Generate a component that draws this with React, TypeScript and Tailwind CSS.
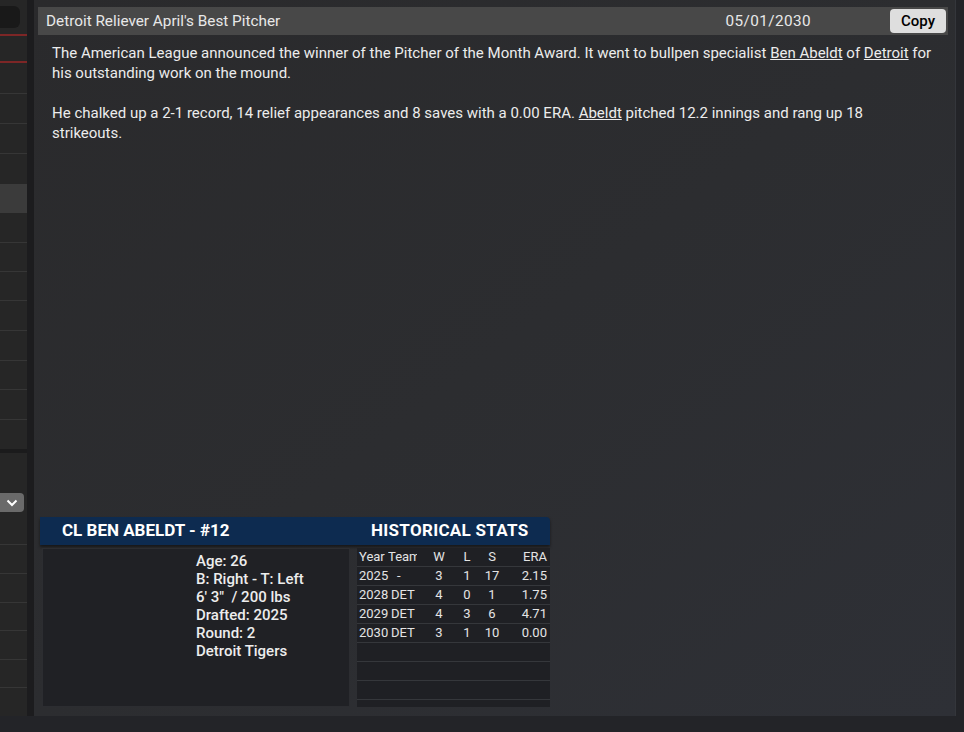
import React from "react";

const font = { fontFamily: "Roboto, 'Noto Sans', sans-serif" };

function Sidebar() {
  return (
    <div className="w-[27px] shrink-0 bg-[#262626] h-[716px] overflow-hidden">
      <div className="h-[6px]" />
      <div className="h-[22px] w-[20px] rounded-r-md bg-[#191919]" />
      <div className="h-[6px]" />
      <div className="h-[2px] bg-[#7d2626]" />
      <div className="h-[25px]" />
      <div className="h-[2px] bg-[#7d2626]" />
      <div className="h-[31px] border-b border-[#363636]" />
      <div className="h-[30px] border-b border-[#363636]" />
      <div className="h-[30px] border-b border-[#363636]" />
      <div className="h-[30px]" />
      <div className="h-[29px] bg-[#3b3b3b]" />
      <div className="h-[30px] border-b border-[#363636]" />
      <div className="h-[29px] border-b border-[#363636]" />
      <div className="h-[29px] border-b border-[#363636]" />
      <div className="h-[30px] border-b border-[#363636]" />
      <div className="h-[30px] border-b border-[#363636]" />
      <div className="h-[29px] border-b border-[#363636]" />
      <div className="h-[30px] border-b border-[#363636]" />
      <div className="h-[29px]" />
      <div className="h-[4px] bg-[#1b1b1c]" />
      <div className="h-[40px]" />
      <div className="h-[19px] w-[24px] rounded-r bg-[#6a6a6a] flex items-center justify-center">
        <svg width="12" height="8" viewBox="0 0 12 8">
          <path d="M1.5 1.5 L6 6 L10.5 1.5" stroke="#fff" strokeWidth="2" fill="none" />
        </svg>
      </div>
      <div className="h-[33px] border-b border-[#363636]" />
      <div className="h-[29px] border-b border-[#363636]" />
      <div className="h-[29px] border-b border-[#363636]" />
      <div className="h-[28px] border-b border-[#363636]" />
      <div className="h-[29px] border-b border-[#363636]" />
      <div className="h-[28px] border-b border-[#363636]" />
    </div>
  );
}

const stats = [
  ["2025", "-", "3", "1", "17", "2.15"],
  ["2028", "DET", "4", "0", "1", "1.75"],
  ["2029", "DET", "4", "3", "6", "4.71"],
  ["2030", "DET", "3", "1", "10", "0.00"],
];

function StatRow({ r, head }: { r: string[]; head?: boolean }) {
  return (
    <div className="flex items-center h-[19px] border-b border-[#35373b] text-[13px] text-[#e4e4e4] pl-[2px]">
      <span className={`${head ? "w-[29px]" : "w-[32px]"} shrink-0`}>{r[0]}</span>
      <span
        className={`${head ? "w-[29px]" : "w-[26px]"} shrink-0 overflow-hidden whitespace-nowrap ${r[1] === "-" ? "pl-[6px]" : ""}`}
      >
        {r[1]}
      </span>
      <span className="w-[44px] shrink-0 text-center">{r[2]}</span>
      <span className="w-[12px] shrink-0 text-center">{r[3]}</span>
      <span className="w-[38px] shrink-0 text-center">{r[4]}</span>
      <span className="w-[36px] shrink-0 text-right">{r[5]}</span>
    </div>
  );
}

function PlayerCard() {
  return (
    <div className="mt-auto ml-[6px] mb-[9px] w-[510px]">
      <div className="h-[28px] flex items-center bg-[#0d2b50] rounded-tr text-white font-bold text-[17px] shadow-[0_2px_3px_rgba(0,0,0,0.5)]">
        <span className="pl-[22px] w-[331px]">CL BEN ABELDT - #12</span>
        <span className="tracking-[0.3px]">HISTORICAL STATS</span>
      </div>
      <div className="flex gap-[7px] mt-[3px]">
        <div className="w-[308px] ml-[2px] h-[159px] bg-[#202125] border border-[#2c2d31] pl-[153px] pt-[3px] text-[15px] leading-[18px] text-[#ededed] font-medium">
          <div>Age: 26</div>
          <div>B: Right - T: Left</div>
          <div>6' 3"&nbsp; / 200 lbs</div>
          <div>Drafted: 2025</div>
          <div>Round: 2</div>
          <div>Detroit Tigers</div>
        </div>
        <div className="w-[193px] h-[159px] bg-[#1f2024]">
          <StatRow head r={["Year", "Team", "W", "L", "S", "ERA"]} />
          {stats.map((r) => (
            <StatRow key={r[0]} r={r} />
          ))}
          <div className="h-[19px] border-b border-[#35373b]" />
          <div className="h-[19px] border-b border-[#35373b]" />
          <div className="h-[19px] border-b border-[#35373b]" />
        </div>
      </div>
    </div>
  );
}

export default function App() {
  return (
    <div className="w-[964px] h-[732px] bg-[#232428] flex items-start overflow-hidden" style={font}>
      <Sidebar />
      <div className="w-[7px] h-[716px] shrink-0 bg-[#1c1c1e]" />
      <div className="w-[922px] h-[716px] shrink-0 flex flex-col bg-gradient-to-br from-[#2a2a2c] via-[#2c2d30] to-[#2e3036] border-r border-[#34363b]">
        <div className="mt-[7px] ml-[4px] w-[910px] h-[28px] shrink-0 bg-[#484848] flex items-center text-[15.3px] text-[#e8e8e8]">
          <span className="pl-[8px] flex-1">Detroit Reliever April's Best Pitcher</span>
          <span className="mr-[79px] tracking-[0.4px]">05/01/2030</span>
          <button className="h-[24px] w-[56px] mr-[2px] rounded bg-[#dedede] text-black text-[15px] font-medium">
            Copy
          </button>
        </div>
        <div className="pl-[18px] pr-[21px] pt-[8px] text-[15px] leading-[20px] text-[#ececec]">
          <p>
            The American League announced the winner of the Pitcher of the Month Award. It went to bullpen specialist{" "}
            <span className="underline">Ben Abeldt</span> of <span className="underline">Detroit</span> for his outstanding
            work on the mound.
          </p>
          <p className="mt-[20px]">
            He chalked up a 2-1 record, 14 relief appearances and 8 saves with a 0.00 ERA.{" "}
            <span className="underline">Abeldt</span> pitched 12.2 innings and rang up 18 strikeouts.
          </p>
        </div>
        <PlayerCard />
      </div>
    </div>
  );
}
